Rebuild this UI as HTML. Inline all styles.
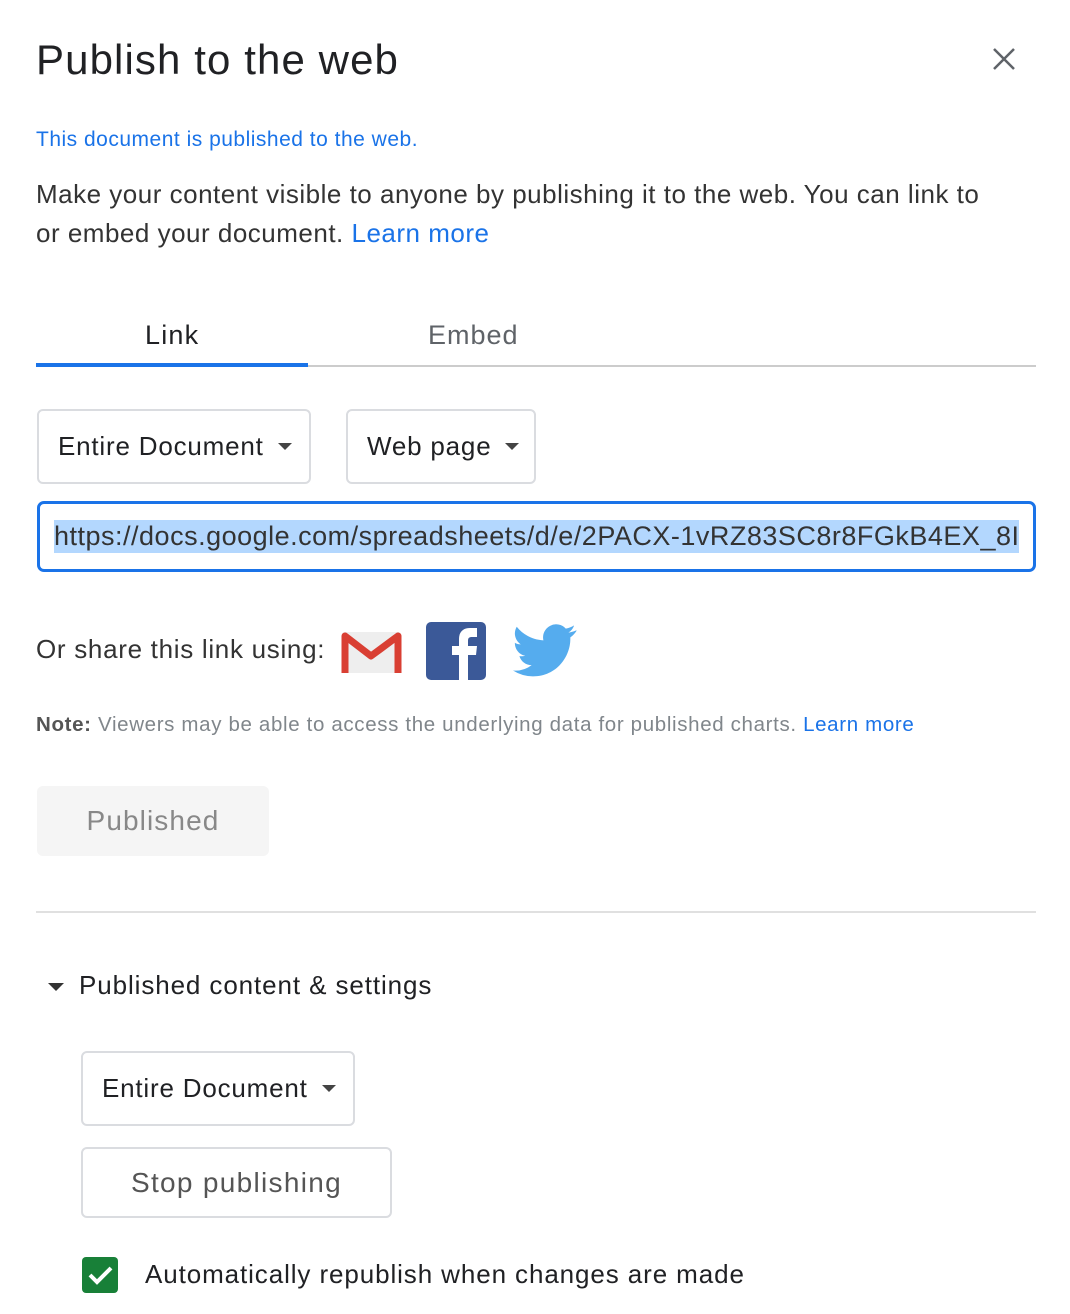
<!DOCTYPE html>
<html><head><meta charset="utf-8"><style>
*{margin:0;padding:0;box-sizing:border-box}
body{width:1070px;height:1314px;background:#fff;font-family:"Liberation Sans",Arial,sans-serif;color:#222;position:relative;overflow:hidden}
.a{position:absolute;white-space:nowrap}
.btn{position:absolute;border:2px solid #dadce0;border-radius:6px;background:#fff}
.dd{font-size:26px;color:#202124;display:flex;align-items:center;padding-left:19px;letter-spacing:0.8px}
.tri{display:inline-block;width:0;height:0;border-left:7px solid transparent;border-right:7px solid transparent;border-top:7px solid #444;margin-left:14px}
</style></head><body>
<div class="a" style="left:36px;top:36px;font-size:42px;color:#202124;letter-spacing:1.1px">Publish to the web</div>
<svg class="a" style="left:992px;top:47px" width="24" height="24" viewBox="0 0 24 24"><path d="M2 2L22 22M22 2L2 22" stroke="#5f6368" stroke-width="2.5"/></svg>
<div class="a" style="left:36px;top:128px;font-size:21px;color:#1a73e8;letter-spacing:0.5px">This document is published to the web.</div>
<div class="a" style="left:36px;top:175px;font-size:26px;line-height:39px;color:#333;white-space:normal;width:960px;letter-spacing:0.5px">Make your content visible to anyone by publishing it to the web. You can link to or embed your document. <span style="color:#1a73e8">Learn more</span></div>
<div class="a" style="left:145px;top:320px;font-size:27px;color:#202124;letter-spacing:1.2px">Link</div>
<div class="a" style="left:428px;top:320px;font-size:27px;color:#5f6368;letter-spacing:1px">Embed</div>
<div class="a" style="left:36px;top:365px;width:1000px;height:2px;background:#ccc"></div>
<div class="a" style="left:36px;top:363px;width:272px;height:4px;background:#1a73e8"></div>
<div class="btn dd" style="left:37px;top:409px;width:274px;height:75px">Entire Document<span class="tri"></span></div>
<div class="btn dd" style="left:346px;top:409px;width:190px;height:75px">Web page<span class="tri"></span></div>
<div class="a" style="left:37px;top:501px;width:999px;height:71px;border:3px solid #1a73e8;border-radius:7px;overflow:hidden">
<div class="a" style="left:14px;top:16px;width:965px;height:33px;background:#b3d7fe;font-size:27px;line-height:33px;color:#333;overflow:hidden;letter-spacing:0.5px">https://docs.google.com/spreadsheets/d/e/2PACX-1vRZ83SC8r8FGkB4EX_8I</div></div>
<div class="a" style="left:36px;top:634px;font-size:26px;color:#333;letter-spacing:0.7px">Or share this link using:</div>
<svg class="a" style="left:341px;top:630px" width="61" height="45" viewBox="0 0 61 45"><rect x="1" y="2" width="59" height="41" rx="3" fill="#eee"/><path d="M4 43V6L30 26L57 6V43" fill="none" stroke="#d93f33" stroke-width="7" stroke-linejoin="round"/></svg>
<svg class="a" style="left:426px;top:622px" width="60" height="58" viewBox="0 0 60 58"><rect width="60" height="58" rx="5" fill="#3b5998"/><path d="M33 58V33h-7v-9h7v-7c0-7 4-11 11-11h7v9h-5c-3 0-4 1-4 4v5h9l-1 9h-8v25z" fill="#fff"/></svg>
<svg class="a" style="left:513px;top:624px" width="64" height="54" viewBox="0 0 24 20"><path d="M23.6 2.3c-.9.4-1.8.6-2.8.8 1-.6 1.8-1.600 2.1-2.7-.9.6-2 1-3.1 1.2A4.9 4.9 0 0 0 11.4 6C7.4 5.8 3.8 3.9 1.4.9c-.4.7-.7 1.6-.7 2.5 0 1.7.9 3.2 2.2 4.1-.8 0-1.6-.2-2.2-.6v.1c0 2.4 1.7 4.4 3.9 4.8-.7.2-1.5.2-2.2.1.6 2 2.4 3.4 4.6 3.4A9.9 9.9 0 0 1 0 17.3 14 14 0 0 0 7.5 19.5c9 0 14-7.5 14-14v-.6c1-.7 1.8-1.6 2.4-2.6z" fill="#55acee"/></svg>
<div class="a" style="left:36px;top:713px;font-size:20.5px;color:#80868b;letter-spacing:0.65px"><b style="color:#555">Note:</b> Viewers may be able to access the underlying data for published charts. <span style="color:#1a73e8">Learn more</span></div>
<div class="a" style="left:37px;top:786px;width:232px;height:70px;background:#f5f5f5;border-radius:6px;font-size:28px;color:#888;text-align:center;line-height:70px;letter-spacing:1.1px">Published</div>
<div class="a" style="left:36px;top:911px;width:1000px;height:2px;background:#e0e0e0"></div>
<div class="a" style="left:48px;top:983px;width:0;height:0;border-left:8px solid transparent;border-right:8px solid transparent;border-top:8px solid #333"></div>
<div class="a" style="left:79px;top:970px;font-size:26px;color:#202124;letter-spacing:0.9px">Published content &amp; settings</div>
<div class="btn dd" style="left:81px;top:1051px;width:274px;height:75px">Entire Document<span class="tri"></span></div>
<div class="btn" style="left:81px;top:1147px;width:311px;height:71px;font-size:28px;color:#555;text-align:center;line-height:67px;letter-spacing:1.3px">Stop publishing</div>
<svg class="a" style="left:82px;top:1257px" width="36" height="36" viewBox="0 0 36 36"><rect width="36" height="36" rx="4" fill="#188038"/><path d="M8 18l7 7L29 11" fill="none" stroke="#fff" stroke-width="4"/></svg>
<div class="a" style="left:145px;top:1259px;font-size:26px;color:#202124;letter-spacing:0.9px">Automatically republish when changes are made</div>
</body></html>
